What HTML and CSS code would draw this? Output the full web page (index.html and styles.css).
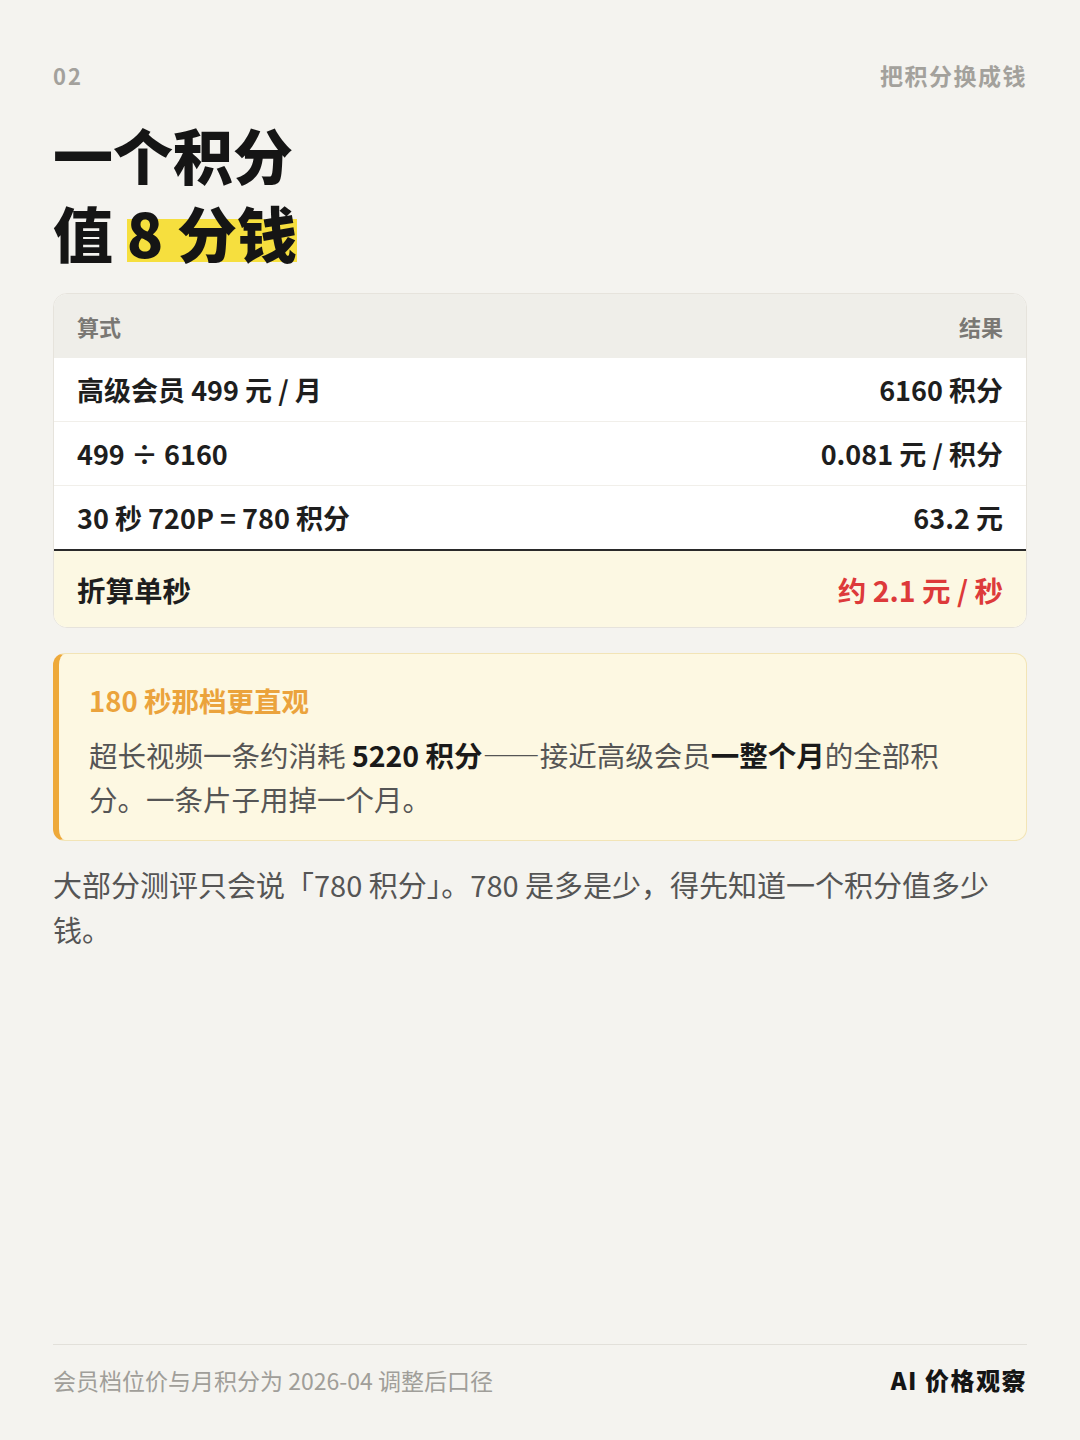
FILE: index.html
```html
<!DOCTYPE html>
<html lang="zh-CN">
<head>
  <meta charset="UTF-8" />
  <meta name="viewport" content="width=device-width, initial-scale=1.0" />
  <title>把积分换成钱</title>
  <link rel="stylesheet" href="styles.css">
</head>
<body>
  <div class="page">
    <div class="topbar">
      <span class="num">02</span>
      <span class="tag">把积分换成钱</span>
    </div>

    <h1 class="title">
      <span class="line">一个积分</span>
      <span class="line">值 <span class="mark">8 分钱</span></span>
    </h1>

    <div class="calc">
      <div class="row head">
        <span>算式</span>
        <span>结果</span>
      </div>
      <div class="row">
        <span>高级会员 499 元 / 月</span>
        <span>6160 积分</span>
      </div>
      <div class="row">
        <span>499 ÷ 6160</span>
        <span>0.081 元 / 积分</span>
      </div>
      <div class="row last">
        <span>30 秒 720P = 780 积分</span>
        <span>63.2 元</span>
      </div>
      <div class="row total">
        <span>折算单秒</span>
        <span class="red">约 2.1 元 / 秒</span>
      </div>
    </div>

    <div class="note">
      <div class="note-title">180 秒那档更直观</div>
      <p>超长视频一条约消耗 <b>5220 积分</b>——接近高级会员<b>一整个月</b>的全部积<br>分。一条片子用掉一个月。</p>
    </div>

    <p class="body-text">大部分测评只会说「780 积分」。780 是多是少，得先知道一个积分值多少<br>钱。</p>

    <div class="footer">
      <span>会员档位价与月积分为 2026-04 调整后口径</span>
      <span class="brand">AI 价格观察</span>
    </div>
  </div>
</body>
</html>
```

FILE: styles.css
```css
body {
  margin: 0;
  background-color: #f4f3ef;
  font-family: "Noto Sans CJK SC", "Noto Sans", sans-serif;
  color: #1e1e1e;
}
.page {
  width: 974px;
  height: 1440px;
  margin: 0 auto;
  padding: 0 53px;
  box-sizing: content-box;
  display: flex;
  flex-direction: column;
}
.topbar {
  display: flex;
  justify-content: space-between;
  margin-top: 60px;
  font-size: 23px;
  font-weight: 700;
  color: #a3a19c;
  line-height: 30px;
}
.num {
  font-size: 22px;
  letter-spacing: 2px;
}
.tag {
  letter-spacing: 1.5px;
}
.title {
  margin: 25px 0 0;
  font-size: 60px;
  font-weight: 900;
  color: #151515;
  display: flex;
  flex-direction: column;
}
.title .line {
  display: block;
  height: 78px;
  line-height: 78px;
}
.mark {
  display: inline-block;
  line-height: 60px;
  padding-top: 2px;
  background: linear-gradient(transparent 30%, #f6df3e 30%, #f6df3e 100%);
}
.calc {
  margin-top: 22px;
  border: 1px solid #e6e3dc;
  border-radius: 14px;
  overflow: hidden;
  background: #fff;
}
.row {
  display: flex;
  justify-content: space-between;
  align-items: center;
  height: 63px;
  padding: 0 23px;
  font-size: 27px;
  font-weight: 700;
  border-bottom: 1px solid #f1efea;
}
.row.head {
  height: 64px;
  background: #efeee9;
  font-size: 22px;
  color: #7a7874;
  border-bottom: none;
}
.row.last {
  border-bottom: 2px solid #2a2a2a;
}
.row.total {
  height: 76px;
  background: #fcf8e3;
  font-size: 28.5px;
  border-bottom: none;
}
.red {
  color: #dd3a3a;
}
.note {
  margin-top: 25px;
  background: #fdf8e2;
  border: 1px solid #f2e4b6;
  border-left: 6px solid #eea93a;
  border-radius: 12px;
  padding: 28px 30px 19px;
}
.note-title {
  font-size: 27.5px;
  font-weight: 700;
  color: #eba33c;
  line-height: 36px;
}
.note p {
  margin: 15px 0 0;
  font-size: 28.5px;
  line-height: 44px;
  color: #555;
}
.note b {
  color: #1a1a1a;
}
.body-text {
  margin: 21px 0 0;
  font-size: 29px;
  line-height: 45px;
  color: #555;
}
.footer {
  margin-top: auto;
  margin-bottom: 44px;
  border-top: 1px solid #e2e0da;
  padding-top: 19px;
  display: flex;
  justify-content: space-between;
  font-size: 23px;
  line-height: 32px;
  color: #a09e99;
}
.brand {
  font-size: 24px;
  letter-spacing: 1.5px;
  font-weight: 900;
  color: #151515;
}
```
